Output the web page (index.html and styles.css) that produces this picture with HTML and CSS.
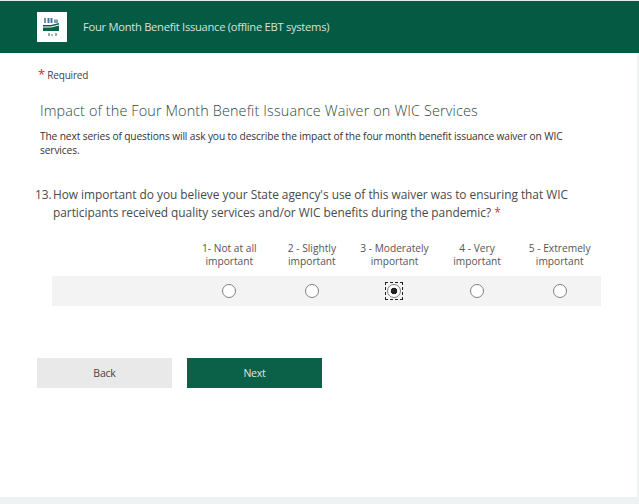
FILE: index.html
```html
<!DOCTYPE html>
<html lang="en">
<head>
<meta charset="utf-8">
<title>Four Month Benefit Issuance</title>
<link rel="stylesheet" href="styles.css">
</head>
<body>
<div class="page">
  <header class="banner">
    <div class="logo">
      <svg width="30" height="30" viewBox="0 0 30 30">
        <rect width="30" height="30" fill="#fff"/>
        <rect x="7" y="6" width="2" height="5" fill="#6f93b8"/>
        <rect x="10.5" y="6" width="2" height="5" fill="#4a76a3"/>
        <rect x="13.5" y="6" width="2" height="5" fill="#4a76a3"/>
        <rect x="17" y="7.5" width="4" height="3.5" fill="#7d9ab8"/>
        <path d="M6 13 L14 13 L22 11 L22 19 L6 19 Z" fill="#0b6148"/>
        <path d="M6 15 L14 15 L22 13" stroke="#fff" stroke-width="1" fill="none"/>
        <rect x="11" y="21" width="2" height="3" fill="#8fb0a2"/>
        <rect x="14" y="22" width="2" height="2" fill="#a5bfb4"/>
        <rect x="18" y="21" width="2" height="3" fill="#8fb0a2"/>
      </svg>
    </div>
    <div class="banner-title">Four Month Benefit Issuance (offline EBT systems)</div>
  </header>
  <main class="content">
    <p class="required"><span class="star">*</span> Required</p>
    <h1 class="section-title">Impact of the Four Month Benefit Issuance Waiver on WIC Services</h1>
    <p class="section-desc">The next series of questions will ask you to describe the impact of the four month benefit issuance waiver on WIC services.</p>
    <div class="question">
      <span class="q-num">13.</span>
      <span class="q-text">How important do you believe your State agency's use of this waiver was to ensuring that WIC participants received quality services and/or WIC benefits during the pandemic? <span class="q-star">*</span></span>
    </div>
    <div class="likert">
      <div class="head-row">
        <div></div>
        <div class="col-label">1- Not at all important</div>
        <div class="col-label">2 - Slightly important</div>
        <div class="col-label">3 - Moderately important</div>
        <div class="col-label">4 - Very important</div>
        <div class="col-label">5 - Extremely important</div>
      </div>
      <div class="radio-row">
        <div></div>
        <div class="cell"><span class="radio"></span></div>
        <div class="cell"><span class="radio"></span></div>
        <div class="cell"><span class="focus"><span class="radio checked"></span></span></div>
        <div class="cell"><span class="radio"></span></div>
        <div class="cell"><span class="radio"></span></div>
      </div>
    </div>
    <div class="actions">
      <div class="btn btn-back">Back</div>
      <div class="btn btn-next">Next</div>
    </div>
  </main>
  <div class="foot"></div>
</div>
</body>
</html>
```
FILE: styles.css
```css
* { box-sizing: border-box; }
html, body { margin: 0; padding: 0; }
body {
  width: 639px;
  height: 504px;
  overflow: hidden;
  background: #fff;
  font-family: "Open Sans", "Noto Sans", sans-serif;
  color: #333;
}
.page {
  height: 504px;
  display: flex;
  flex-direction: column;
  border-right: 2px solid #eef2f2;
}
.banner {
  height: 53px;
  flex: none;
  margin-right: -2px;
  background: #045a43;
  border-top: 1px solid #e4ecea;
  display: flex;
  align-items: center;
  padding-left: 37px;
  padding-bottom: 1px;
}
.logo { width: 30px; height: 30px; flex: none; }
.logo svg { display: block; }
.banner-title {
  margin-left: 16px;
  color: #d5e2dd;
  font-size: 11.2px;
  letter-spacing: -0.28px;
  line-height: 16px;
  white-space: nowrap;
}
.content { flex: 1; padding: 15px 0 0 38px; }
.required {
  margin: 0;
  font-size: 10px;
  line-height: 14px;
  letter-spacing: -0.2px;
  color: #444;
}
.star { color: #d61f1f; font-size: 13px; line-height: 10px; }
.section-title {
  margin: 19px 0 0 2px;
  font-weight: 300;
  font-size: 14.4px;
  line-height: 20px;
  letter-spacing: 0.14px;
  color: #2c4a44;
  white-space: nowrap;
}
.section-desc {
  margin: 8px 0 0 2px;
  width: 545px;
  font-size: 10.2px;
  line-height: 14px;
  letter-spacing: -0.12px;
  color: #333;
}
.question {
  margin: 28px 0 0 -3px;
  display: flex;
  width: 565px;
  font-size: 11.9px;
  line-height: 18px;
  letter-spacing: -0.03px;
  color: #4a4a4a;
}
.q-num { width: 18px; flex: none; }
.q-text { flex: 1; }
.q-star { color: #b4484c; }
.likert { margin: 21px 0 0 14px; width: 549px; }
.head-row, .radio-row {
  display: grid;
  grid-template-columns: 136px repeat(5, 1fr);
}
.col-label {
  font-size: 10.2px;
  line-height: 13px;
  letter-spacing: 0;
  text-align: center;
  padding: 0 6px;
  color: #555;
  height: 34px;
}
.radio-row { height: 30px; background: #f3f3f3; }
.cell { display: flex; align-items: center; justify-content: center; }
.radio {
  display: block;
  width: 14px;
  height: 14px;
  border: 1px solid #808080;
  border-radius: 50%;
  background: #fff;
}
.radio.checked {
  background: radial-gradient(circle, #222 0 3px, #fff 3.6px);
}
.focus {
  display: block;
  padding: 1px;
  outline: 1px dashed #222;
}
.actions { margin: 52px 0 0 -1px; display: flex; gap: 15px; }
.btn {
  width: 135px;
  height: 30px;
  display: flex;
  align-items: center;
  justify-content: center;
  font-size: 10.5px;
  letter-spacing: -0.2px;
}
.btn-back { background: #e9e9e9; color: #444; }
.btn-next { background: #0b6048; color: #dfeae6; }
.foot { height: 7px; flex: none; background: #eef2f2; }
```
